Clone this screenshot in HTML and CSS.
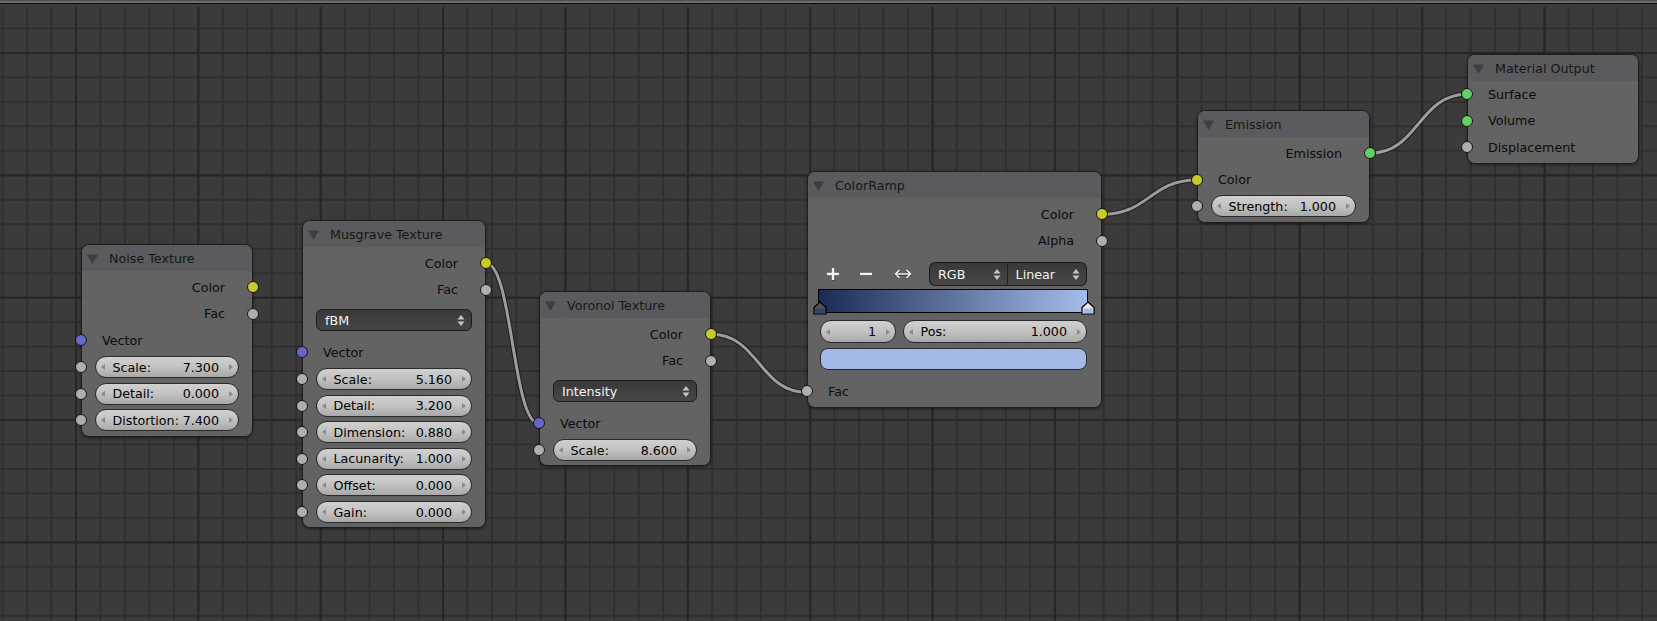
FILE: index.html
```html
<!DOCTYPE html>
<html>
<head>
<meta charset="utf-8">
<link rel="stylesheet" href="styles.css">
</head>
<body>
<div class="editor">
  <div class="topbar"></div>

  <svg class="wires" width="1657" height="621" viewBox="0 0 1657 621">
    <g class="wire-outer">
      <path d="M486,263.3 C512.5,263.3 512.5,423.7 539,423.7"/>
      <path d="M711,334.3 C759,334.3 759,392.3 807,392.3"/>
      <path d="M1102,214.3 C1149.5,214.3 1149.5,179.9 1197,179.9"/>
      <path d="M1370,153.3 C1418.5,153.3 1418.5,94.3 1467,94.3"/>
    </g>
    <g class="wire-inner">
      <path d="M486,263.3 C512.5,263.3 512.5,423.7 539,423.7"/>
      <path d="M711,334.3 C759,334.3 759,392.3 807,392.3"/>
      <path d="M1102,214.3 C1149.5,214.3 1149.5,179.9 1197,179.9"/>
      <path d="M1370,153.3 C1418.5,153.3 1418.5,94.3 1467,94.3"/>
    </g>
  </svg>

  <!-- Noise Texture -->
  <div class="node n-noise">
    <div class="head"><svg class="tri" width="11" height="10" viewBox="0 0 11 10"><path d="M0,0.5 L11,0.5 L5.5,10 Z"/></svg><span>Noise Texture</span></div>
    <div class="body">
      <div class="row out"><span>Color</span><i class="sock yellow"></i></div>
      <div class="row out"><span>Fac</span><i class="sock grey"></i></div>
      <div class="row in"><i class="sock blue"></i><span>Vector</span></div>
      <div class="row in"><i class="sock grey"></i><div class="field"><b class="al"></b><span class="lbl">Scale:</span><span class="val">7.300</span><b class="ar"></b></div></div>
      <div class="row in"><i class="sock grey"></i><div class="field"><b class="al"></b><span class="lbl">Detail:</span><span class="val">0.000</span><b class="ar"></b></div></div>
      <div class="row in"><i class="sock grey"></i><div class="field"><b class="al"></b><span class="lbl">Distortion:</span><span class="val">7.400</span><b class="ar"></b></div></div>
    </div>
  </div>

  <!-- Musgrave Texture -->
  <div class="node n-musgrave">
    <div class="head"><svg class="tri" width="11" height="10" viewBox="0 0 11 10"><path d="M0,0.5 L11,0.5 L5.5,10 Z"/></svg><span>Musgrave Texture</span></div>
    <div class="body">
      <div class="row out"><span>Color</span><i class="sock yellow"></i></div>
      <div class="row out"><span>Fac</span><i class="sock grey"></i></div>
      <div class="menu-row"><div class="menu"><span>fBM</span><svg class="updown" width="8" height="13" viewBox="0 0 8 13"><path d="M0.5,5.5 L4,1 L7.5,5.5 Z M0.5,7.5 L4,12 L7.5,7.5 Z"/></svg></div></div>
      <div class="row in"><i class="sock blue"></i><span>Vector</span></div>
      <div class="row in"><i class="sock grey"></i><div class="field"><b class="al"></b><span class="lbl">Scale:</span><span class="val">5.160</span><b class="ar"></b></div></div>
      <div class="row in"><i class="sock grey"></i><div class="field"><b class="al"></b><span class="lbl">Detail:</span><span class="val">3.200</span><b class="ar"></b></div></div>
      <div class="row in"><i class="sock grey"></i><div class="field"><b class="al"></b><span class="lbl">Dimension:</span><span class="val">0.880</span><b class="ar"></b></div></div>
      <div class="row in"><i class="sock grey"></i><div class="field"><b class="al"></b><span class="lbl">Lacunarity:</span><span class="val">1.000</span><b class="ar"></b></div></div>
      <div class="row in"><i class="sock grey"></i><div class="field"><b class="al"></b><span class="lbl">Offset:</span><span class="val">0.000</span><b class="ar"></b></div></div>
      <div class="row in"><i class="sock grey"></i><div class="field"><b class="al"></b><span class="lbl">Gain:</span><span class="val">0.000</span><b class="ar"></b></div></div>
    </div>
  </div>

  <!-- Voronoi Texture -->
  <div class="node n-voronoi">
    <div class="head"><svg class="tri" width="11" height="10" viewBox="0 0 11 10"><path d="M0,0.5 L11,0.5 L5.5,10 Z"/></svg><span>Voronoi Texture</span></div>
    <div class="body">
      <div class="row out"><span>Color</span><i class="sock yellow"></i></div>
      <div class="row out"><span>Fac</span><i class="sock grey"></i></div>
      <div class="menu-row"><div class="menu"><span>Intensity</span><svg class="updown" width="8" height="13" viewBox="0 0 8 13"><path d="M0.5,5.5 L4,1 L7.5,5.5 Z M0.5,7.5 L4,12 L7.5,7.5 Z"/></svg></div></div>
      <div class="row in"><i class="sock blue"></i><span>Vector</span></div>
      <div class="row in"><i class="sock grey"></i><div class="field"><b class="al"></b><span class="lbl">Scale:</span><span class="val">8.600</span><b class="ar"></b></div></div>
    </div>
  </div>

  <!-- ColorRamp -->
  <div class="node n-ramp">
    <div class="head"><svg class="tri" width="11" height="10" viewBox="0 0 11 10"><path d="M0,0.5 L11,0.5 L5.5,10 Z"/></svg><span>ColorRamp</span></div>
    <div class="body">
      <div class="row out"><span>Color</span><i class="sock yellow"></i></div>
      <div class="row out"><span>Alpha</span><i class="sock grey"></i></div>
      <div class="tools">
        <span class="tool t1"><svg width="14" height="14" viewBox="0 0 14 14"><path class="ico-sh" d="M7,1.5 V13.5 M1,7.5 H13"/><path class="ico" d="M7,1 V13 M1,7 H13"/></svg></span>
        <span class="tool t2"><svg width="14" height="14" viewBox="0 0 14 14"><path class="ico-sh" d="M1,7.5 H13"/><path class="ico" d="M1,7 H13"/></svg></span>
        <span class="tool t3"><svg width="18" height="14" viewBox="0 0 18 14"><path class="ico-sh" d="M1.5,7.5 H16.5 M5.5,3.5 L1.5,7.5 L5.5,11.5 M12.5,3.5 L16.5,7.5 L12.5,11.5"/><path class="ico thin" d="M1.5,7 H16.5 M5.5,3 L1.5,7 L5.5,11 M12.5,3 L16.5,7 L12.5,11"/></svg></span>
        <div class="seg">
          <div class="menu segl"><span>RGB</span><svg class="updown" width="8" height="13" viewBox="0 0 8 13"><path d="M0.5,5.5 L4,1 L7.5,5.5 Z M0.5,7.5 L4,12 L7.5,7.5 Z"/></svg></div>
          <div class="menu segr"><span>Linear</span><svg class="updown" width="8" height="13" viewBox="0 0 8 13"><path d="M0.5,5.5 L4,1 L7.5,5.5 Z M0.5,7.5 L4,12 L7.5,7.5 Z"/></svg></div>
        </div>
      </div>
      <div class="ramp">
        <svg class="stop stop-l" width="14" height="14" viewBox="0 0 14 14"><path d="M1,6.5 L7,1 L13,6.5 L13,13 L1,13 Z" fill="#555" stroke="#000" stroke-width="1.2"/><rect x="2.5" y="7.5" width="9" height="4.5" fill="#2e4470"/></svg>
        <svg class="stop stop-r" width="14" height="14" viewBox="0 0 14 14"><path d="M1,6.5 L7,1 L13,6.5 L13,13 L1,13 Z" fill="#e8e8e8" stroke="#000" stroke-width="1.2"/><rect x="2.5" y="7.5" width="9" height="4.5" fill="#a3bbe8"/></svg>
      </div>
      <div class="ramp-fields">
        <div class="field f-idx"><b class="al"></b><span class="lbl"></span><span class="val">1</span><b class="ar"></b></div>
        <div class="field f-pos"><b class="al"></b><span class="lbl">Pos:</span><span class="val">1.000</span><b class="ar"></b></div>
      </div>
      <div class="swatch"></div>
      <div class="row in fac"><i class="sock grey"></i><span>Fac</span></div>
    </div>
  </div>

  <!-- Emission -->
  <div class="node n-emission">
    <div class="head"><svg class="tri" width="11" height="10" viewBox="0 0 11 10"><path d="M0,0.5 L11,0.5 L5.5,10 Z"/></svg><span>Emission</span></div>
    <div class="body">
      <div class="row out"><span>Emission</span><i class="sock green"></i></div>
      <div class="row in"><i class="sock yellow"></i><span>Color</span></div>
      <div class="row in"><i class="sock grey"></i><div class="field"><b class="al"></b><span class="lbl">Strength:</span><span class="val">1.000</span><b class="ar"></b></div></div>
    </div>
  </div>

  <!-- Material Output -->
  <div class="node n-output">
    <div class="head"><svg class="tri" width="11" height="10" viewBox="0 0 11 10"><path d="M0,0.5 L11,0.5 L5.5,10 Z"/></svg><span>Material Output</span></div>
    <div class="body">
      <div class="row in"><i class="sock green"></i><span>Surface</span></div>
      <div class="row in"><i class="sock green"></i><span>Volume</span></div>
      <div class="row in"><i class="sock grey"></i><span>Displacement</span></div>
    </div>
  </div>
</div>
</body>
</html>
```

FILE: styles.css
```css
html, body {
  margin: 0;
  padding: 0;
  background: #393939;
  overflow: hidden;
}

.editor {
  position: relative;
  width: 1657px;
  height: 621px;
  overflow: hidden;
  font-family: "DejaVu Sans", "Liberation Sans", sans-serif;
  font-size: 12.7px;
  background-color: #3b3b3b;
  background-image:
    linear-gradient(to right, #262626 0 2px, transparent 2px),
    linear-gradient(to bottom, #262626 0 2px, transparent 2px),
    linear-gradient(to right, #2f2f2f 0 2px, transparent 2px),
    linear-gradient(to bottom, #2f2f2f 0 2px, transparent 2px);
  background-size: 122.4px 100%, 100% 122.4px, 24.48px 100%, 100% 24.48px;
  background-position: 75px 0, 0 52px, 1.56px 0, 0 3.04px;
}

.topbar {
  height: 7px;
  background: linear-gradient(to bottom,
    #4f4f4f 0 1px, #6e6e6e 1px 3px, #0d0d0d 3px 4.5px, #3c3c3c 4.5px 7px);
}

.wires {
  position: absolute;
  left: 0;
  top: 0;
}
.wire-outer path {
  fill: none;
  stroke: #1e1e1e;
  stroke-width: 5;
}
.wire-inner path {
  fill: none;
  stroke: #9c9c9c;
  stroke-width: 3;
}

/* ---------- nodes ---------- */
.node {
  position: absolute;
  box-sizing: border-box;
  border: 1px solid #1e1e1e;
  border-radius: 8px;
  background: rgba(104, 104, 104, 0.9);
  box-shadow: 0 1px 3px rgba(0, 0, 0, 0.5);
  color: #0b0b0b;
}
.n-noise { left: 81px; top: 244px; width: 172px; }
.n-musgrave { left: 302px; top: 220px; width: 184px; }
.n-voronoi { left: 539px; top: 291px; width: 172px; }
.n-ramp { left: 807px; top: 171px; width: 295px; }
.n-emission { left: 1197px; top: 110px; width: 173px; }
.n-output { left: 1467px; top: 54px; width: 172px; }

.head {
  height: 26px;
  display: flex;
  align-items: center;
  padding-left: 5px;
  border-radius: 7px 7px 0 0;
  background: rgba(90, 90, 94, 0.92);
  color: #161616;
  white-space: nowrap;
}
.head .tri {
  fill: #3e3e3e;
  margin-right: 11px;
  margin-top: 1px;
}

.body {
  padding: 3px 0 2px 0;
}
.n-output .body {
  padding-top: 0;
  padding-bottom: 2px;
}

.row {
  position: relative;
  height: 26.6px;
  display: flex;
  align-items: center;
  white-space: nowrap;
}
.row.out {
  justify-content: flex-end;
  padding-right: 27px;
}
.row.in > span {
  padding-left: 20px;
}

.sock {
  position: absolute;
  top: 50%;
  width: 12px;
  height: 12px;
  box-sizing: border-box;
  margin-top: -6px;
  border-radius: 50%;
  border: 1px solid #151515;
}
.row.out .sock { right: -7px; }
.row.in .sock { left: -7px; }
.yellow { background: #c9c92c; }
.grey { background: #aeaeae; }
.blue { background: #6666cc; }
.green { background: #66cc66; }

/* number fields */
.field {
  box-sizing: border-box;
  height: 22px;
  display: flex;
  align-items: center;
  padding: 0 4px;
  border: 1px solid #2a2a2a;
  border-radius: 11px;
  background: linear-gradient(to bottom, #d0d0d0 0%, #c2c2c2 50%, #a8a8a8 100%);
  color: #000;
  white-space: nowrap;
}
.row .field {
  flex: 1;
  margin: 0 13px 0 13px;
}
.field .al, .field .ar {
  width: 0;
  height: 0;
  border-top: 3.5px solid transparent;
  border-bottom: 3.5px solid transparent;
}
.field .al {
  border-right: 4px solid #8a8a8a;
  margin-left: 1px;
}
.field .ar {
  border-left: 4px solid #8a8a8a;
  margin-right: 1px;
}
.field .lbl {
  margin-left: 7.5px;
  flex: 1;
}
.field .val {
  margin-right: 10px;
}

/* dropdown menus */
.menu-row {
  padding: 6px 13px 8px 13px;
}
.menu {
  box-sizing: border-box;
  height: 22px;
  display: flex;
  align-items: center;
  justify-content: space-between;
  padding: 0 6px 0 8px;
  border: 1px solid #1c1c1c;
  border-radius: 6px;
  background: linear-gradient(to bottom, #393939, #474747);
  color: #f2f2f2;
  white-space: nowrap;
}
.updown {
  fill: #c4c4c4;
}

/* color ramp */
.tools {
  height: 24px;
  margin-top: 8px;
  display: flex;
  align-items: center;
  padding-left: 9px;
}
.tool {
  display: flex;
  justify-content: center;
  align-items: center;
}
.t1 { width: 32px; }
.t2 { width: 33px; }
.t3 { width: 41px; }
.ico {
  fill: none;
  stroke: #f4f4f4;
  stroke-width: 2.4;
}
.ico.thin { stroke-width: 1.6; }
.ico-sh {
  fill: none;
  stroke: rgba(0, 0, 0, 0.45);
  stroke-width: 2.4;
}
.seg {
  display: flex;
  margin-left: 6px;
  width: 158px;
  height: 24px;
}
.seg .menu {
  height: 24px;
  flex: 1;
}
.seg .segl {
  border-radius: 6px 0 0 6px;
  border-right-color: #222;
}
.seg .segr {
  border-radius: 0 6px 6px 0;
  border-left: none;
  flex: 1.03;
}

.ramp {
  position: relative;
  box-sizing: border-box;
  height: 24px;
  margin: 3px 13px 0 10px;
  border: 1px solid #000;
  background: linear-gradient(to right, #1c2b56, #a4bce9);
}
.stop {
  position: absolute;
  bottom: -3px;
}
.stop-l { left: -6px; }
.stop-r { right: -8px; }

.ramp-fields {
  display: flex;
  margin: 7px 14px 0 12px;
}
.ramp-fields .field {
  height: 23px;
}
.f-idx { width: 76px; }
.f-pos { flex: 1; margin-left: 7px; }

.swatch {
  box-sizing: border-box;
  height: 22px;
  margin: 5px 14px 0 12px;
  border: 1px solid #2a2a2a;
  border-radius: 8px;
  background: #a3b9e6;
}

.row.fac {
  margin-top: 8px;
}
```
